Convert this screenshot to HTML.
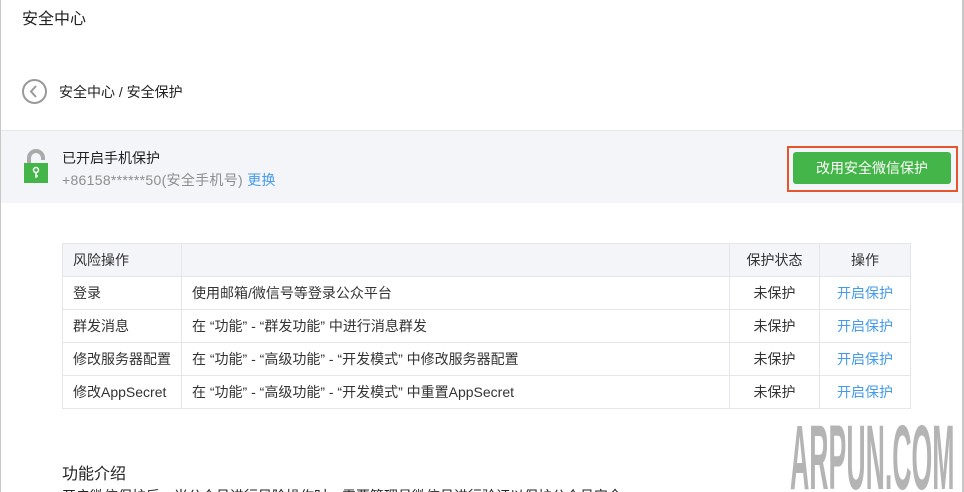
<!DOCTYPE html>
<html><head><meta charset="utf-8"><style>
*{margin:0;padding:0;box-sizing:border-box}
html,body{width:964px;height:492px;overflow:hidden}
body{background:#fff;font-family:"Liberation Sans","Noto Sans CJK SC",sans-serif;font-size:14px;color:#222;position:relative}
.a{position:absolute}
table{border-collapse:collapse;position:absolute;left:62px;top:243px;width:849px}
td{border:1px solid #e4e6eb;height:33px;padding:0 10px;font-size:14px;color:#333}
tr:first-child td{background:#f4f5f9}
.c{text-align:center}
.l{color:#459ae9}
</style></head><body>
<div class="a" style="left:0;top:0;width:1px;height:492px;background:#c8c8c8"></div>
<div class="a" style="left:962px;top:0;width:2px;height:492px;background:#c8c8c8"></div>
<div class="a" style="left:22px;top:5px;font-size:16px">安全中心</div>
<div class="a" style="left:22px;top:79px;width:25px;height:25px;border:2px solid #999;border-radius:50%"></div>
<svg class="a" style="left:22px;top:79px" width="25" height="25"><path d="M14 7 L9 12.5 L14 18" stroke="#999" stroke-width="2" fill="none"/></svg>
<div class="a" style="left:59px;top:82px;font-size:14px">安全中心 / 安全保护</div>
<div class="a" style="left:1px;top:130px;width:961px;height:73px;background:#f4f5f9;border-top:1px solid #e6e7ec"></div>
<svg class="a" style="left:23px;top:148px" width="26" height="36"><path d="M6 16 V10 a7 7 0 0 1 14 0 V12" stroke="#aaa" stroke-width="4" fill="none"/><rect x="1" y="15" width="24" height="20" fill="#44b549"/><circle cx="13" cy="22" r="2.5" fill="none" stroke="#fff" stroke-width="1.5"/><path d="M13 24.5 V30 M13 28 H15" stroke="#fff" stroke-width="1.5"/></svg>
<div class="a" style="left:62px;top:148px;font-size:14px;color:#222">已开启手机保护</div>
<div class="a" style="left:62px;top:170px;font-size:14px;color:#8d8d8d;letter-spacing:0.3px">+86158******50(安全手机号) <span class="l">更换</span></div>
<div class="a" style="left:787px;top:146px;width:171px;height:46px;border:2px solid #e4572e"></div>
<div class="a" style="left:793px;top:152px;width:158px;height:32px;background:#44b549;border-radius:3px;color:#fff;font-size:14px;text-align:center;line-height:32px">改用安全微信保护</div>
<table>
<tr><td style="width:119px">风险操作</td><td></td><td class="c" style="width:90px">保护状态</td><td class="c" style="width:91px">操作</td></tr>
<tr><td>登录</td><td>使用邮箱/微信号等登录公众平台</td><td class="c">未保护</td><td class="c l">开启保护</td></tr>
<tr><td>群发消息</td><td>在 “功能” - “群发功能” 中进行消息群发</td><td class="c">未保护</td><td class="c l">开启保护</td></tr>
<tr><td>修改服务器配置</td><td>在 “功能” - “高级功能” - “开发模式” 中修改服务器配置</td><td class="c">未保护</td><td class="c l">开启保护</td></tr>
<tr><td>修改AppSecret</td><td>在 “功能” - “高级功能” - “开发模式” 中重置AppSecret</td><td class="c">未保护</td><td class="c l">开启保护</td></tr>
</table>
<div class="a" style="left:62px;top:460px;font-size:16px">功能介绍</div>
<div class="a" style="left:62px;top:486px;font-size:14px;white-space:nowrap">开启微信保护后，当公众号进行风险操作时，需要管理员微信号进行验证以保护公众号安全</div>
<div class="a" style="left:790px;top:412px;font-size:92px;line-height:1;font-weight:bold;color:#b4b4b4;transform:scaleX(0.29);transform-origin:left top;white-space:nowrap;font-family:'Liberation Sans',sans-serif">ARPUN.COM</div>
</body></html>
